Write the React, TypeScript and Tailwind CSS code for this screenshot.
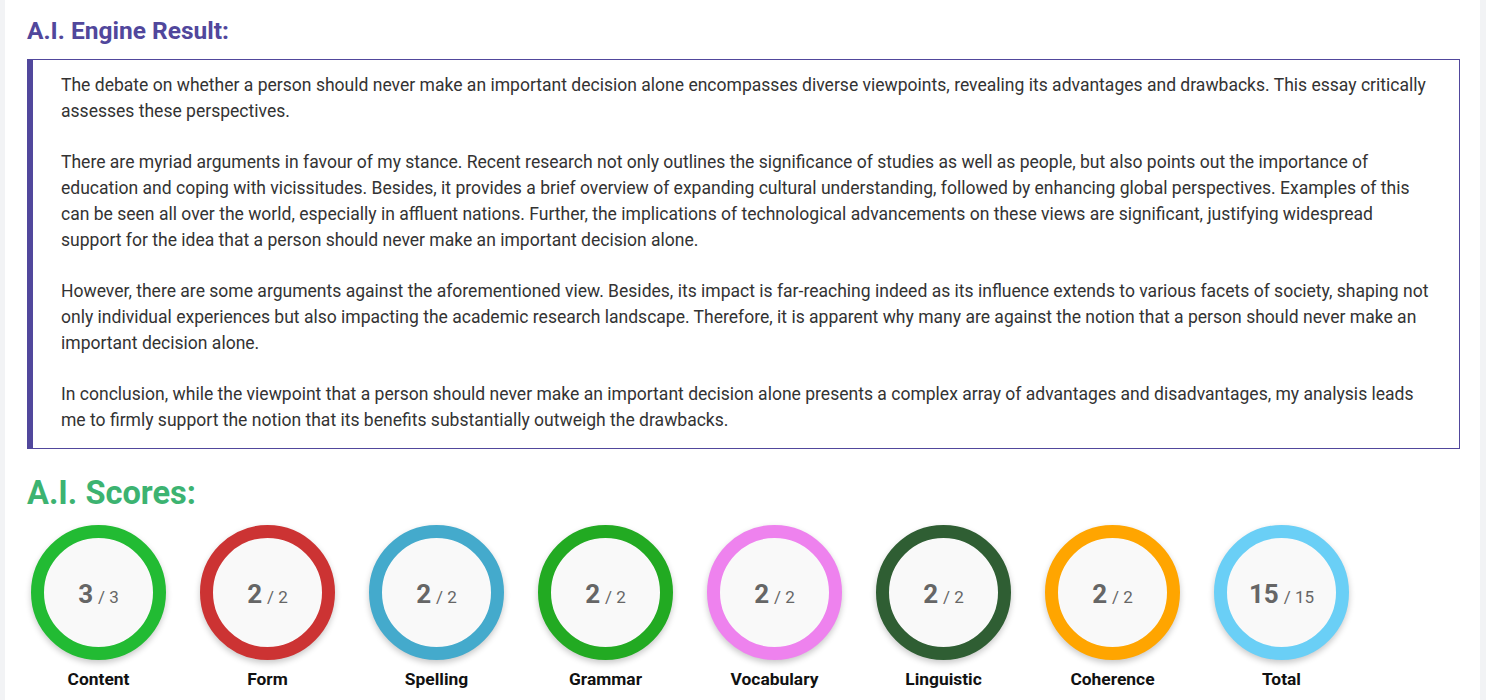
const paragraphs = [
  'The debate on whether a person should never make an important decision alone encompasses diverse viewpoints, revealing its advantages and drawbacks. This essay critically assesses these perspectives.',
  'There are myriad arguments in favour of my stance. Recent research not only outlines the significance of studies as well as people, but also points out the importance of education and coping with vicissitudes. Besides, it provides a brief overview of expanding cultural understanding, followed by enhancing global perspectives. Examples of this can be seen all over the world, especially in affluent nations. Further, the implications of technological advancements on these views are significant, justifying widespread support for the idea that a person should never make an important decision alone.',
  'However, there are some arguments against the aforementioned view. Besides, its impact is far-reaching indeed as its influence extends to various facets of society, shaping not only individual experiences but also impacting the academic research landscape. Therefore, it is apparent why many are against the notion that a person should never make an important decision alone.',
  'In conclusion, while the viewpoint that a person should never make an important decision alone presents a complex array of advantages and disadvantages, my analysis leads me to firmly support the notion that its benefits substantially outweigh the drawbacks.',
];

const scores = [
  { label: 'Content', score: 3, max: 3, ring: 'border-[#22bb33]' },
  { label: 'Form', score: 2, max: 2, ring: 'border-[#cc3333]' },
  { label: 'Spelling', score: 2, max: 2, ring: 'border-[#44aacc]' },
  { label: 'Grammar', score: 2, max: 2, ring: 'border-[#22aa22]' },
  { label: 'Vocabulary', score: 2, max: 2, ring: 'border-[#ee82ee]' },
  { label: 'Linguistic', score: 2, max: 2, ring: 'border-[#2f5e33]' },
  { label: 'Coherence', score: 2, max: 2, ring: 'border-[#ffa500]' },
  { label: 'Total', score: 15, max: 15, ring: 'border-[#6acff6]' },
];

function ScoreCircle({ label, score, max, ring }: { label: string; score: number; max: number; ring: string }) {
  return (
    <div className="flex w-[135px] flex-col items-center">
      <div
        className={`flex h-[135px] w-[135px] items-center justify-center rounded-full border-[13px] bg-[#f9f9f9] shadow-[0_3px_6px_rgba(0,0,0,0.22)] ${ring}`}
      >
        <div className="flex items-baseline pt-[2px] text-[#666]">
          <span className="text-[26px] font-bold leading-none">{score}</span>
          <span className="ml-[5px] text-[17px] font-normal leading-none">/ {max}</span>
        </div>
      </div>
      <div className="mt-[9px] text-[17.4px] font-bold leading-[20px] text-[#111]">{label}</div>
    </div>
  );
}

export default function App() {
  return (
    <div className="min-h-screen bg-[#f2f3f5] pl-[5px] pr-[6px] font-['Roboto',sans-serif]">
      <div className="min-h-screen bg-white pl-[22px] pr-[20px] pt-[16px]">
        <h2 className="text-[24.5px] font-bold leading-[30px] text-[#51479c]">A.I. Engine Result:</h2>
        <div className="mt-[13px] border border-l-[6px] border-[#51479c] pb-[15px] pl-[28px] pr-[24px] pt-[12px] text-[17.55px] leading-[26px] text-[#333]">
          {paragraphs.map((p, i) => (
            <p key={i} className={i > 0 ? 'mt-[25px]' : ''}>
              {p}
            </p>
          ))}
        </div>
        <h2 className="mt-[26px] text-[32.6px] font-bold leading-[36px] text-[#3cb371]">A.I. Scores:</h2>
        <div className="mt-[14px] flex gap-[34px] pl-[4px]">
          {scores.map((s) => (
            <ScoreCircle key={s.label} {...s} />
          ))}
        </div>
      </div>
    </div>
  );
}
